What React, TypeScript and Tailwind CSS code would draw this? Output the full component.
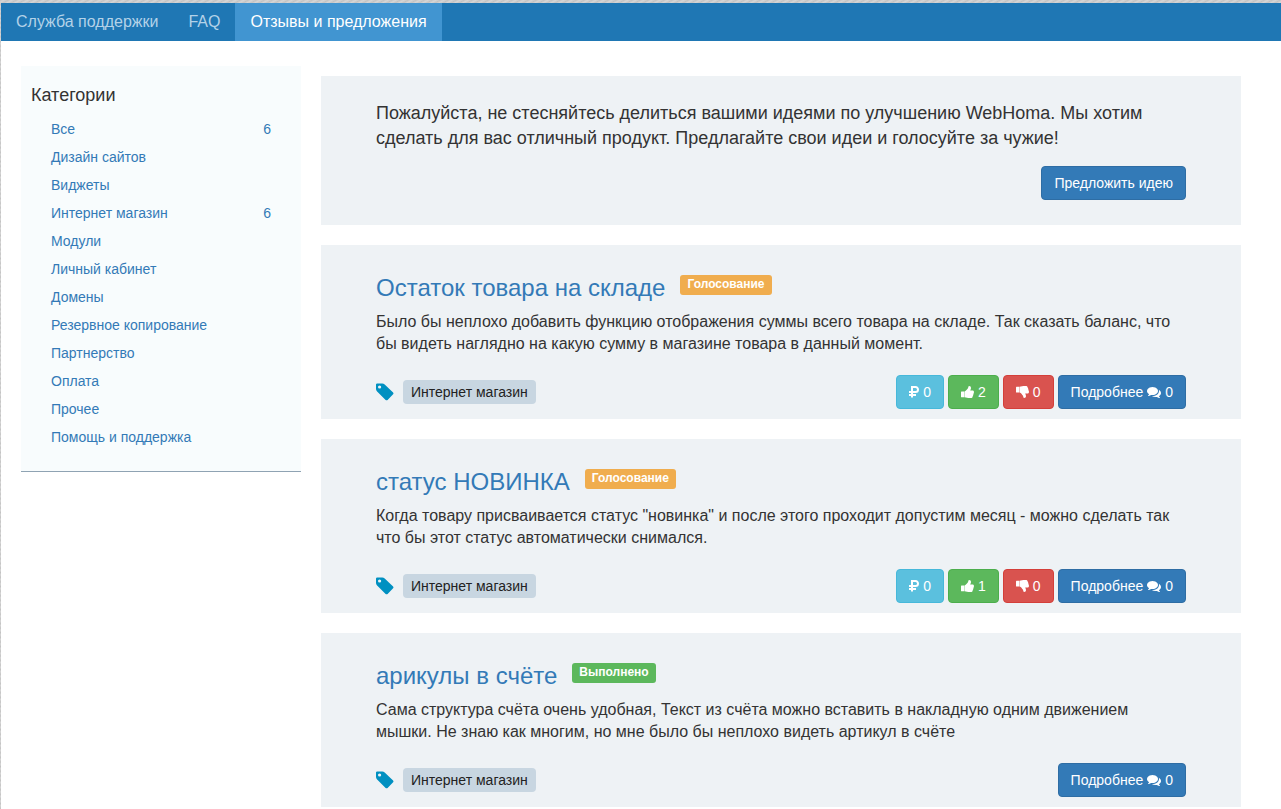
import type { ReactNode } from "react";

type Category = { name: string; count?: number };

const categories: Category[] = [
  { name: "Все", count: 6 },
  { name: "Дизайн сайтов" },
  { name: "Виджеты" },
  { name: "Интернет магазин", count: 6 },
  { name: "Модули" },
  { name: "Личный кабинет" },
  { name: "Домены" },
  { name: "Резервное копирование" },
  { name: "Партнерство" },
  { name: "Оплата" },
  { name: "Прочее" },
  { name: "Помощь и поддержка" },
];

type Idea = {
  title: string;
  status: "vote" | "done";
  text: string;
  category: string;
  votes?: { money: number; up: number; down: number };
  comments: number;
};

const ideas: Idea[] = [
  {
    title: "Остаток товара на складе",
    status: "vote",
    text: "Было бы неплохо добавить функцию отображения суммы всего товара на складе. Так сказать баланс, что бы видеть наглядно на какую сумму в магазине товара в данный момент.",
    category: "Интернет магазин",
    votes: { money: 0, up: 2, down: 0 },
    comments: 0,
  },
  {
    title: "статус НОВИНКА",
    status: "vote",
    text: 'Когда товару присваивается статус "новинка" и после этого проходит допустим месяц - можно сделать так что бы этот статус автоматически снимался.',
    category: "Интернет магазин",
    votes: { money: 0, up: 1, down: 0 },
    comments: 0,
  },
  {
    title: "арикулы в счёте",
    status: "done",
    text: "Сама структура счёта очень удобная, Текст из счёта можно вставить в накладную одним движением мышки. Не знаю как многим, но мне было бы неплохо видеть артикул в счёте",
    category: "Интернет магазин",
    comments: 0,
  },
];

function TagIcon() {
  return (
    <svg viewBox="0 0 18 18" className="size-[18px] fill-[#0090c1]" aria-hidden="true">
      <path
        fillRule="evenodd"
        d="M0 1.600Q0 .5 1.200.5H6.300Q7.600.5 8.700 1.500L17.100 9.500Q18 10.400 17.100 11.300L11.600 16.900Q10.600 17.800 9.600 16.900L1.100 8.500Q0 7.400 0 6ZM3.600 2.400A1.600 1.600 0 1 0 3.600 5.600 1.600 1.600 0 0 0 3.600 2.400Z"
      />
    </svg>
  );
}

function ThumbIcon({ down = false }: { down?: boolean }) {
  return (
    <svg viewBox="0 0 13 14" className="h-[14px] w-[13px] fill-current" aria-hidden="true">
      <g transform={down ? "matrix(1 0 0 -1 0 14)" : undefined}>
        <path d="M.5 6.500H3.500V12.300H.5Q0 12.300 0 11.800V7Q0 6.500.5 6.500Z" />
        <path d="M3.700 6.400C5.200 5.800 5.900 4.400 6.800 3.500 7.400 2.800 7.200 1 8.100 1 9.400 1 10 1.800 10 3 10 4 9.500 4.700 9.200 5.500H11.500C12.400 5.500 13 6.200 13 7 13 7.500 12.800 7.900 12.600 8.200 12.800 8.800 12.600 9.400 12.200 9.800 12.300 10.400 12.100 10.900 11.700 11.200 11.700 12.500 10.900 13 9.700 13H8.700C6.800 13 5.200 12.400 3.700 12.200Z" />
      </g>
    </svg>
  );
}

function RubleIcon() {
  return (
    <svg viewBox="0 0 10 14" className="h-[14px] w-[10px] fill-none stroke-current stroke-2" aria-hidden="true">
      <path d="M3 12.500V2H6.500a2.500 2.500 0 0 1 0 5H0M0 10H7" />
    </svg>
  );
}

function CommentsIcon() {
  return (
    <svg viewBox="0 0 1792 1792" className="size-[14px] fill-current" aria-hidden="true">
      <path d="M1408 768q0 139-94 257t-256.500 186.500-353.500 68.500q-86 0-176-16-124 88-278 128-36 9-86 16h-3q-11 0-20.500-8t-11.500-21q-1-3-1-6.500t.5-6.500 2-6l2.500-5 3.500-5.500 4-5 4.500-5 4-4.500q5-6 23-25t26-29.500 22.500-29 25-38.500 20.500-44q-124-72-195-177t-71-224q0-139 94-257t256.500-186.500 353.500-68.500 353.500 68.500 256.500 186.500 94 257zm384 256q0 120-71 224.500t-195 176.500q10 24 20.500 44t25 38.500 22.500 29 26 29.500 23 25q1 1 4 4.500t4.500 5 4 5 3.500 5.500l2.500 5 2 6 .5 6.500-1 6.500q-3 14-13 22t-22 7q-50-7-86-16-154-40-278-128-90 16-176 16-271 0-472-132 58 4 88 4 161 0 309-45t264-129q125-92 192-212t67-254q0-77-23-152 129 71 204 178t71 230z" />
    </svg>
  );
}

const tones = {
  primary: "border-[#2e6da4] bg-[#337ab7] hover:bg-[#286090]",
  info: "border-[#46b8da] bg-[#5bc0de] hover:bg-[#31b0d5]",
  success: "border-[#4cae4c] bg-[#5cb85c] hover:bg-[#449d44]",
  danger: "border-[#d43f3a] bg-[#d9534f] hover:bg-[#c9302c]",
};

function Button({ tone, label, children }: { tone: keyof typeof tones; label?: string; children: ReactNode }) {
  return (
    <button
      type="button"
      aria-label={label}
      className={`flex h-[34px] cursor-pointer items-center gap-1 rounded-sm border px-3 text-sm text-white ${tones[tone]}`}
    >
      {children}
    </button>
  );
}

function IdeaCard({ idea }: { idea: Idea }) {
  return (
    <article className="bg-[#eef2f5] px-[55px] pt-[30px] pb-[10px]">
      <div className="flex items-start gap-[15px]">
        <h2 className="text-2xl leading-[26px] text-[#337ab7]">
          <a href="#idea" className="hover:underline">{idea.title}</a>
        </h2>
        <span
          className={`h-5 rounded-[3px] px-[7px] text-xs leading-[18px] font-bold text-white ${
            idea.status === "vote" ? "bg-[#f0ad4e]" : "bg-[#5cb85c]"
          }`}
        >
          {idea.status === "vote" ? "Голосование" : "Выполнено"}
        </span>
      </div>
      <p className="mt-[10px] text-base leading-[22px]">{idea.text}</p>
      <div className="mt-5 flex items-center justify-between">
        <div className="flex items-center gap-[9px]">
          <TagIcon />
          <a href="#category" className="rounded-sm bg-[#c8d6e1] px-2 text-sm leading-6 text-[#222]">
            {idea.category}
          </a>
        </div>
        <div className="flex gap-1">
          {idea.votes && (
            <>
              <Button tone="info" label="Поддержать рублём"><RubleIcon />{idea.votes.money}</Button>
              <Button tone="success" label="За"><ThumbIcon />{idea.votes.up}</Button>
              <Button tone="danger" label="Против"><ThumbIcon down />{idea.votes.down}</Button>
            </>
          )}
          <Button tone="primary">
            Подробнее <CommentsIcon />{idea.comments}
          </Button>
        </div>
      </div>
    </article>
  );
}

export default function App() {
  return (
    <div className="min-h-screen bg-[#c8c8c8] bg-[repeating-linear-gradient(150deg,#c2c2c2_0px,#d6d6d6_2px,#c6c6c6_4px)] pt-[3px] pl-px font-['Liberation_Sans',Arial,sans-serif] text-[#333]">
      <div className="min-h-screen bg-white">
        <nav className="flex bg-[#1f77b4] text-base leading-[38px] text-[#b3d2e8]">
          <a href="#support" className="px-[15px] hover:text-white">Служба поддержки</a>
          <a href="#faq" className="px-[15px] hover:text-white">FAQ</a>
          <a href="#ideas" className="bg-[#4195d1] px-[15px] text-white">Отзывы и предложения</a>
        </nav>
        <div className="flex items-start gap-5 pt-[25px] pr-10 pl-5">
          <aside className="w-[280px] shrink-0 border-b border-[#8fa3b3] bg-[#f8fcfd] pt-[19px] pb-5">
            <h2 className="pl-[10px] text-lg leading-5">Категории</h2>
            <ul className="mt-[10px] px-[30px] text-sm leading-7 text-[#337ab7]">
              {categories.map((c) => (
                <li key={c.name}>
                  <a href="#category" className="flex justify-between hover:underline">
                    <span>{c.name}</span>
                    {c.count !== undefined && <span>{c.count}</span>}
                  </a>
                </li>
              ))}
            </ul>
          </aside>
          <main className="mt-[10px] flex min-w-0 flex-1 flex-col gap-5">
            <section className="bg-[#eef2f5] px-[55px] py-[25px]">
              <p className="text-lg leading-[25px]">
                Пожалуйста, не стесняйтесь делиться вашими идеями по улучшению WebHoma. Мы хотим сделать для вас отличный продукт. Предлагайте свои идеи и голосуйте за чужие!
              </p>
              <div className="mt-[15px] flex justify-end">
                <Button tone="primary">Предложить идею</Button>
              </div>
            </section>
            {ideas.map((idea) => (
              <IdeaCard key={idea.title} idea={idea} />
            ))}
          </main>
        </div>
      </div>
    </div>
  );
}
